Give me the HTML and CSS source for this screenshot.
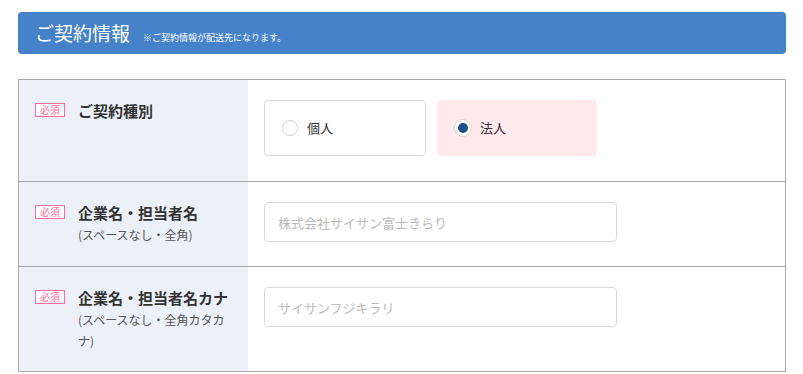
FILE: index.html
```html
<!DOCTYPE html>
<html lang="ja">
<head>
    <meta charset="UTF-8">
    <meta name="viewport" content="width=device-width, initial-scale=1.0">
    <title>ご契約情報</title>
    <link rel="stylesheet" href="styles.css">
</head>
<body>
    <div class="form-wrap">
        <h2 class="section-head">
            <span class="section-title">ご契約情報</span>
            <span class="section-note">※ご契約情報が配送先になります。</span>
        </h2>

        <div class="form-table">
            <div class="form-row">
                <div class="form-label">
                    <span class="badge">必須</span>
                    <div class="label-text">
                        <span class="label-main">ご契約種別</span>
                    </div>
                </div>
                <div class="form-field">
                    <div class="radio-group">
                        <label class="radio-box">
                            <input type="radio" name="type" value="personal">
                            <span class="radio-mark"></span>
                            <span class="radio-text">個人</span>
                        </label>
                        <label class="radio-box is-checked">
                            <input type="radio" name="type" value="corp" checked>
                            <span class="radio-mark"></span>
                            <span class="radio-text">法人</span>
                        </label>
                    </div>
                </div>
            </div>

            <div class="form-row">
                <div class="form-label">
                    <span class="badge">必須</span>
                    <div class="label-text">
                        <span class="label-main">企業名・担当者名</span>
                        <span class="label-sub">(スペースなし・全角)</span>
                    </div>
                </div>
                <div class="form-field">
                    <input type="text" class="text-input" placeholder="株式会社サイサン富士きらり">
                </div>
            </div>

            <div class="form-row">
                <div class="form-label">
                    <span class="badge">必須</span>
                    <div class="label-text">
                        <span class="label-main">企業名・担当者名カナ</span>
                        <span class="label-sub">(スペースなし・全角カタカナ)</span>
                    </div>
                </div>
                <div class="form-field">
                    <input type="text" class="text-input" placeholder="サイサンフジキラリ">
                </div>
            </div>
        </div>
    </div>
</body>
</html>
```

FILE: styles.css
```css
:root {
    --head-bg: #4682c9;
    --line: #aaaaaa;
    --label-bg: #ecf0f8;
    --text: #333333;
    --text-sub: #555555;
    --pink: #ff6b9d;
    --pink-bg: #ffe9ec;
    --field-border: #d9d9d9;
    --radio-on: #1f4e8c;
}

*, *::before, *::after {
    box-sizing: border-box;
    margin: 0;
    padding: 0;
}

body {
    font-family: "Noto Sans CJK JP", "Noto Sans", sans-serif;
    color: var(--text);
    background: #fff;
}

.form-wrap {
    width: 768px;
    margin-left: 18px;
    padding-top: 12px;
}

/* Section header */
.section-head {
    display: flex;
    align-items: baseline;
    height: 42px;
    padding: 6px 17px 0;
    background: var(--head-bg);
    border-radius: 4px;
    color: #fff;
    font-weight: 400;
}
.section-title {
    font-size: 19px;
    line-height: 30px;
}
.section-note {
    font-size: 9px;
    margin-left: 13px;
}

/* Table */
.form-table {
    margin-top: 25px;
    border: 1px solid var(--line);
}
.form-row {
    display: flex;
}
.form-row + .form-row {
    border-top: 1px solid var(--line);
}

.form-label {
    display: flex;
    align-items: flex-start;
    width: 229px;
    flex-shrink: 0;
    background: var(--label-bg);
    padding: 22px 18px 20px 16px;
}
.badge {
    flex-shrink: 0;
    width: 30px;
    height: 14px;
    margin-top: 1px;
    border: 1px solid var(--pink);
    color: var(--pink);
    font-size: 10px;
    line-height: 12px;
    text-align: center;
    background: #fff;
}
.label-text {
    display: flex;
    flex-direction: column;
    margin-left: 13px;
}
.label-main {
    font-size: 15px;
    font-weight: 700;
    line-height: 18px;
}
.label-sub {
    font-size: 12px;
    color: var(--text-sub);
    line-height: 21px;
    margin-top: 2px;
}

.form-field {
    flex: 1;
    padding: 20px 16px 24px;
}

/* Radios */
.radio-group {
    display: flex;
    gap: 11px;
    padding-bottom: 1px;
}
.radio-box {
    display: flex;
    align-items: center;
    gap: 9px;
    width: 162px;
    height: 56px;
    padding-left: 17px;
    border: 1px solid var(--field-border);
    border-radius: 4px;
    font-size: 13px;
    color: var(--text);
    cursor: pointer;
}
.radio-box input { display: none; }
.radio-box.is-checked {
    width: 160px;
    background: var(--pink-bg);
    border-color: var(--pink-bg);
}
.radio-text {
    line-height: 1;
    margin-bottom: 2px;
}
.radio-mark {
    width: 16px;
    height: 16px;
    border: 1px solid #d6d6d6;
    border-radius: 50%;
    background: #fff;
}
.radio-box.is-checked .radio-mark {
    border: 3px solid #fff;
    background: var(--radio-on);
    box-shadow: 0 0 0 1px #d6d6d6;
}

/* Text inputs */
.text-input {
    display: block;
    width: 353px;
    height: 40px;
    padding: 0 13px;
    border: 1px solid var(--field-border);
    border-radius: 4px;
    font-family: inherit;
    font-size: 13px;
    color: var(--text);
    outline: none;
}
.text-input::placeholder {
    color: #bbbbbb;
}
```
